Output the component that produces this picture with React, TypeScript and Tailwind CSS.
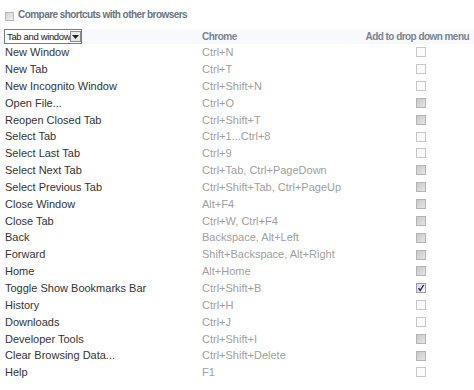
import React from 'react'

interface Row {
  name: string
  keys: string
  state: 'empty' | 'filled' | 'checked'
}

const ROWS: Row[] = [
  { name: 'New Window', keys: 'Ctrl+N', state: 'empty' },
  { name: 'New Tab', keys: 'Ctrl+T', state: 'empty' },
  { name: 'New Incognito Window', keys: 'Ctrl+Shift+N', state: 'empty' },
  { name: 'Open File...', keys: 'Ctrl+O', state: 'filled' },
  { name: 'Reopen Closed Tab', keys: 'Ctrl+Shift+T', state: 'filled' },
  { name: 'Select Tab', keys: 'Ctrl+1...Ctrl+8', state: 'empty' },
  { name: 'Select Last Tab', keys: 'Ctrl+9', state: 'empty' },
  { name: 'Select Next Tab', keys: 'Ctrl+Tab, Ctrl+PageDown', state: 'filled' },
  { name: 'Select Previous Tab', keys: 'Ctrl+Shift+Tab, Ctrl+PageUp', state: 'filled' },
  { name: 'Close Window', keys: 'Alt+F4', state: 'filled' },
  { name: 'Close Tab', keys: 'Ctrl+W, Ctrl+F4', state: 'filled' },
  { name: 'Back', keys: 'Backspace, Alt+Left', state: 'filled' },
  { name: 'Forward', keys: 'Shift+Backspace, Alt+Right', state: 'filled' },
  { name: 'Home', keys: 'Alt+Home', state: 'filled' },
  { name: 'Toggle Show Bookmarks Bar', keys: 'Ctrl+Shift+B', state: 'checked' },
  { name: 'History', keys: 'Ctrl+H', state: 'empty' },
  { name: 'Downloads', keys: 'Ctrl+J', state: 'empty' },
  { name: 'Developer Tools', keys: 'Ctrl+Shift+I', state: 'filled' },
  { name: 'Clear Browsing Data...', keys: 'Ctrl+Shift+Delete', state: 'filled' },
  { name: 'Help', keys: 'F1', state: 'empty' },
]

const Box: React.FC<{ state: Row['state'] }> = ({ state }) => {
  if (state === 'checked') {
    return (
      <span className="flex h-[10px] w-[10px] items-center justify-center border border-[#9a9aa8] bg-gradient-to-br from-[#d8d8e4] to-[#f2f2f6]">
        <svg width="8" height="8" viewBox="0 0 8 8">
          <path d="M1.5 4.2 L3.2 6.5 L6.6 1" stroke="#2a2a44" strokeWidth="1.4" fill="none" />
        </svg>
      </span>
    )
  }
  if (state === 'filled') {
    return <span className="block h-[10px] w-[10px] border border-[#b4b4b4] bg-gradient-to-br from-[#c8c8c8] to-[#e6e6e6]" />
  }
  return <span className="block h-[10px] w-[10px] border border-[#c8c8c8] bg-[#fbfbfb]" />
}

const App: React.FC = () => {
  return (
    <div className="h-[390px] w-[474px] overflow-hidden bg-white font-['Liberation_Sans',Arial,sans-serif] text-[11px]">
      <div className="flex h-[24px] items-end gap-[4px] pl-[5px] pb-[2px]">
        <span className="mb-[1px] block h-[9px] w-[9px] border border-[#b8b8b8] bg-gradient-to-br from-[#d4d4d4] to-[#f0f0f0]" />
        <span className="text-[10px] font-bold tracking-[-0.55px] text-[#6b7480]">Compare shortcuts with other browsers</span>
      </div>
      <div className="mt-[5px] flex h-[15px] items-center bg-[#f7f9fc]">
        <div className="ml-[4px] flex h-[15px] w-[78px] items-center justify-between border border-[#7a7a7a] bg-white pl-[2px] pr-[2px] text-[#222]">
          <span className="whitespace-nowrap text-[9.5px] leading-none tracking-[-0.35px]">Tab and window</span>
          <span className="flex h-[11px] w-[11px] shrink-0 items-center justify-center border border-[#8a8a8a] bg-[#e8e8e8]">
            <svg width="7" height="4" viewBox="0 0 7 4"><path d="M0 0 L7 0 L3.5 4 Z" fill="#222" /></svg>
          </span>
        </div>
        <span className="ml-[120px] text-[10px] font-bold tracking-[-0.5px] text-[#7a8490]">Chrome</span>
        <span className="ml-auto pr-[5px] text-[10px] font-bold tracking-[-0.55px] text-[#7a8490]">Add to drop down menu</span>
      </div>
      <div>
        {ROWS.map(r => (
          <div key={r.name} className="flex h-[16.85px] items-center">
            <span className="w-[202px] pl-[5px] text-[#333]">{r.name}</span>
            <span className="flex-1 text-[#a0a0a0]">{r.keys}</span>
            <span className="mr-[48px] flex w-[10px] justify-center"><Box state={r.state} /></span>
          </div>
        ))}
      </div>
    </div>
  )
}

export default App
